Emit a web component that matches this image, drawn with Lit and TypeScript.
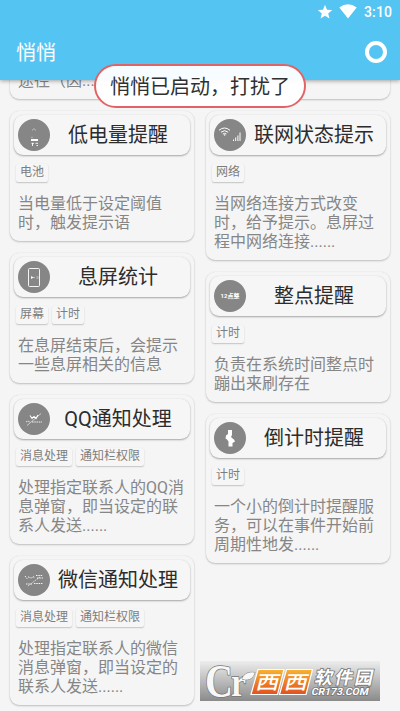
import { LitElement, html, svg, css, TemplateResult } from "lit";
import { customElement, property } from "lit/decorators.js";

interface Item {
  title: string;
  icon: string;
  tags: string[];
  lines: string[];
}

const LEFT: Item[] = [
  { title: "", icon: "", tags: [], lines: ["", "", "途径（因......"] },
  { title: "低电量提醒", icon: "battery", tags: ["电池"], lines: ["当电量低于设定阈值", "时，触发提示语"] },
  { title: "息屏统计", icon: "phone", tags: ["屏幕", "计时"], lines: ["在息屏结束后，会提示", "一些息屏相关的信息"] },
  { title: "QQ通知处理", icon: "qq", tags: ["消息处理", "通知栏权限"], lines: ["处理指定联系人的QQ消", "息弹窗，即当设定的联", "系人发送......"] },
  { title: "微信通知处理", icon: "wechat", tags: ["消息处理", "通知栏权限"], lines: ["处理指定联系人的微信", "消息弹窗，即当设定的", "联系人发送......"] },
];

const RIGHT: Item[] = [
  { title: "", icon: "", tags: [], lines: ["", "", ""] },
  { title: "联网状态提示", icon: "network", tags: ["网络"], lines: ["当网络连接方式改变", "时，给予提示。息屏过", "程中网络连接......"] },
  { title: "整点提醒", icon: "hour", tags: ["计时"], lines: ["负责在系统时间整点时", "蹦出来刷存在"] },
  { title: "倒计时提醒", icon: "countdown", tags: ["计时"], lines: ["一个小的倒计时提醒服", "务，可以在事件开始前", "周期性地发......"] },
];

const GLYPHS: Record<string, TemplateResult> = {
  battery: svg`
    <path d="M14 11.500l2-1.800 2 1.800" fill="none" stroke="#ccc" stroke-width=".8"/>
    <path d="M13 20h7v2h-7z" fill="#fff"/>
    <path d="M13.500 24.300h2.500M14.500 24v3M17.500 24.300h2.500M18.500 26.500h1.500" stroke="#fff" stroke-width=".9"/>
    <path d="M13.500 18.300h1" stroke="#ddd" stroke-width="1"/>`,
  phone: svg`
    <rect x="10.500" y="7.500" width="11" height="18" rx="1" fill="none" stroke="#fff" stroke-width=".9"/>
    <path d="M13 15l2.600 1.500L13 18z" fill="#fff"/>
    <path d="M15 16.500h2M18.500 15.600h1M18.500 17.400h1M20 15.600v2" stroke="#ddd" stroke-width=".7"/>`,
  network: svg`
    <g fill="none" stroke="#fff" stroke-width="1">
      <path d="M5 11.300q5.400-4.600 11 0M7 13.200q3.600-3 7.200 0M8.800 15q1.800-1.400 3.600 0"/>
      <path d="M19.500 22v-1.500M21.700 22v-3.500M23.900 22v-5.500M26 22v-8.500"/>
    </g><circle cx="10.600" cy="16" r=".8" fill="#fff"/>`,
  hour: svg`<text x="16" y="18.300" text-anchor="middle" font-size="6" font-weight="700" fill="#fff">12点整</text>`,
  countdown: svg`<path d="M14 8h4v5l-1 2 1 1 2 1.500 1 2-2.500 1.500V24.500h-4v-5l-1.500-2-1.500-1 .5-3L14 12z" fill="#fff"/>`,
  qq: svg`
    <g fill="none" stroke="#fff" stroke-width=".9">
      <path d="M12 12.500l2 3 2-2 2 2 2-3.500M13 14.500h5" stroke-width="1.100"/>
      <path d="M23 10.500L9 22.500" stroke-width=".6"/>
      <path d="M8 19q2-1.500 4 0M14 19h10" stroke-dasharray="1.500 .8"/>
    </g>`,
  wechat: svg`
    <g fill="none" stroke="#fff" stroke-width=".9" stroke-dasharray="1.500 .8">
      <path d="M7 12l2 2.500 2-2 2 2 2-2 2 1.500M18 11.500h7M19 14h6M8 20h6M16 19.500h9"/>
      <path d="M22 13L10 22" stroke-width=".7"/>
    </g>`,
};

@customElement("service-card")
export class ServiceCard extends LitElement {
  @property({ attribute: false }) item!: Item;

  static styles = css`
    :host {
      display: block;
      box-sizing: border-box;
      padding: 4px 4px 9px;
      border-radius: 9px;
      background: #f5f5f5;
      box-shadow: 0 1px 2px rgba(0, 0, 0, 0.22), 0 0 1.5px rgba(0, 0, 0, 0.08);
    }
    .head {
      display: flex;
      align-items: center;
      height: 40px;
      box-sizing: border-box;
      padding: 0 4px;
      border-radius: 9px;
      background: #f6f6f6;
      box-shadow: 0 1px 2px rgba(0, 0, 0, 0.32), 0 0 1.5px rgba(0, 0, 0, 0.08);
    }
    .icon {
      flex: none;
      width: 32px;
      height: 32px;
    }
    .title {
      flex: 1;
      text-align: center;
      white-space: nowrap;
      font-size: 20px;
      line-height: 40px;
      color: #2c2c2c;
    }
    .tags {
      display: flex;
      gap: 4px;
      height: 18px;
      margin: 9px 2px 0;
    }
    .tag {
      padding: 0 4px;
      border-radius: 2px;
      font-size: 12px;
      line-height: 17px;
      color: #7d7d7d;
      background: #f6f6f6;
      box-shadow: 0 1px 1.5px rgba(0, 0, 0, 0.2), 0 0 1px rgba(0, 0, 0, 0.05);
    }
    .desc {
      margin: 12px 4px 0;
      color: #868686;
      font-size: 16px;
      line-height: 19px;
      white-space: nowrap;
    }
    .line {
      height: 19px;
    }
  `;

  render() {
    const { title, icon, tags, lines } = this.item;
    return html`
      <div class="head">
        <svg class="icon" viewBox="0 0 32 32">
          <circle cx="16" cy="16" r="16" fill="#868686" />
          ${GLYPHS[icon]}
        </svg>
        <div class="title">${title}</div>
      </div>
      <div class="tags">${tags.map((t) => html`<span class="tag">${t}</span>`)}</div>
      <div class="desc">${lines.map((l) => html`<div class="line">${l}</div>`)}</div>
    `;
  }
}

@customElement("app-root")
export class AppRoot extends LitElement {
  static styles = css`
    :host {
      display: flex;
      flex-direction: column;
      position: relative;
      width: 400px;
      height: 711px;
      overflow: hidden;
      background: #f5f5f5;
      font-family: Roboto, "Noto Sans CJK SC", sans-serif;
    }
    .bar {
      flex: none;
      height: 80px;
      z-index: 1;
      background: #54c4f3;
      box-shadow: 0 1px 4px rgba(0, 0, 0, 0.35);
      color: #fff;
    }
    .status {
      display: flex;
      justify-content: flex-end;
      align-items: center;
      height: 24px;
      padding-right: 8px;
    }
    .clock {
      margin-left: 6px;
      font-size: 14px;
      font-weight: 500;
      line-height: 24px;
      letter-spacing: 0.1px;
    }
    .tool {
      display: flex;
      justify-content: space-between;
      align-items: center;
      height: 56px;
      padding: 0 13px 0 16px;
    }
    .name {
      font-size: 20px;
      line-height: 56px;
      padding-top: 1px;
    }
    .ring {
      width: 14px;
      height: 14px;
      border: 4px solid #fff;
      border-radius: 50%;
    }
    .list {
      flex: 1;
      min-height: 0;
      overflow: hidden;
      display: flex;
      gap: 12px;
      padding: 0 10px;
    }
    .col {
      width: 184px;
      display: flex;
      flex-direction: column;
      gap: 12px;
      margin-top: -130px;
    }
    .toast {
      position: absolute;
      z-index: 2;
      left: 94px;
      top: 64px;
      box-sizing: border-box;
      width: 212px;
      height: 44px;
      border: 2px solid #e06466;
      border-radius: 22px;
      background: rgba(255, 255, 255, 0.95);
      text-align: center;
      font-size: 20px;
      line-height: 42px;
      color: #303030;
      white-space: nowrap;
    }
    .mark {
      position: absolute;
      left: 200px;
      top: 661px;
      width: 180px;
      height: 40px;
    }
  `;

  render() {
    return html`
      <header class="bar">
        <div class="status">
          <svg width="44" height="24" viewBox="0 0 44 24" fill="#fff">
            <path d="M11 4.800l2 4.900 5.200.4-4 3.400 1.300 5.100-4.500-2.800-4.500 2.800 1.300-5.100-4-3.400 5.200-.4z" />
            <path d="M25.300 7.500q8.700-6.300 17.400 0L34 18.400z" />
          </svg>
          <span class="clock">3:10</span>
        </div>
        <div class="tool">
          <span class="name">悄悄</span>
          <div class="ring"></div>
        </div>
      </header>
      <main class="list">
        ${[LEFT, RIGHT].map(
          (col) => html`<div class="col">
            ${col.map((i) => html`<service-card .item=${i}></service-card>`)}
          </div>`
        )}
      </main>
      <div class="toast">悄悄已启动，打扰了</div>
      <svg class="mark" viewBox="0 0 180 40">
        <defs>
          <linearGradient id="bg" x1="0" y1="0" x2="0" y2="1">
            <stop offset="0" stop-color="#ededed" />
            <stop offset="1" stop-color="#8a8a8a" />
          </linearGradient>
          <linearGradient id="or" x1="0" y1="0" x2="0" y2="1">
            <stop offset="0" stop-color="#f8b233" />
            <stop offset="1" stop-color="#e2501f" />
          </linearGradient>
        </defs>
        <rect width="180" height="40" fill="url(#bg)" />
        <g fill="#f8f8f8" stroke="#777" stroke-width="1.600" paint-order="stroke" font-family="Liberation Serif, serif" font-weight="700">
          <text x="5" y="35.500" font-size="47" textLength="28" lengthAdjust="spacingAndGlyphs">C</text>
          <text x="31" y="34.500" font-size="41" textLength="15" lengthAdjust="spacingAndGlyphs">r</text>
          <path d="M42 18q3-8 13-6.500-3 8.500-11 7z" stroke-width="1" />
        </g>
        <g stroke="#fff" stroke-width="1.200" fill="url(#or)">
          <path d="M58 8.500h26l-6.500 25H51z" />
          <path d="M86.500 8.500h26l-6.500 25h-26.500z" />
        </g>
        <g fill="#fff" font-family="Noto Sans CJK SC, sans-serif" font-weight="700">
          <g transform="translate(55 28) skewX(-14)" font-weight="500">
            <text transform="scale(1.230 1)" font-size="19">西</text>
            <text transform="translate(28.500 0) scale(1.230 1)" font-size="19">西</text>
          </g>
          <g stroke="#777" stroke-width="1.600" paint-order="stroke">
            <text transform="translate(114 22.500) skewX(-12)" font-size="18" textLength="58" lengthAdjust="spacing">软件园</text>
            <text transform="translate(111 34) skewX(-12)" font-family="Roboto, sans-serif" font-size="10" textLength="57" lengthAdjust="spacingAndGlyphs">CR173.COM</text>
          </g>
        </g>
      </svg>
    `;
  }
}
